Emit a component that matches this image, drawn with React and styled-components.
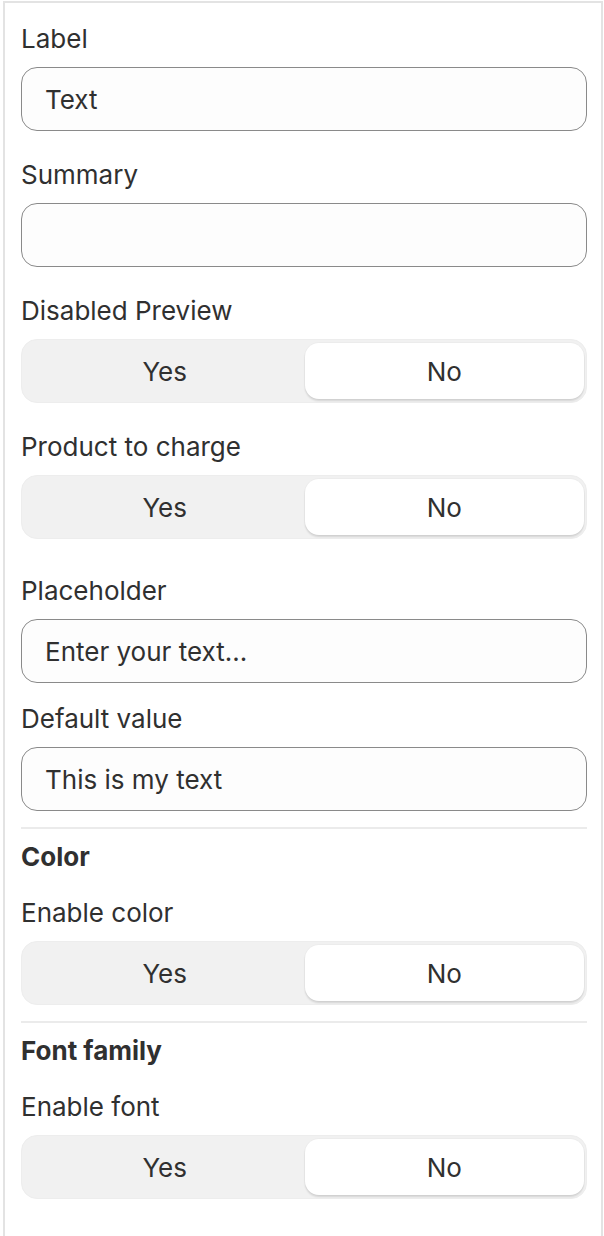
import React from "react";
import styled, { createGlobalStyle } from "styled-components";

const Global = createGlobalStyle`
  html, body { margin: 0; padding: 0; background: #ffffff; }
  body { font-family: Inter, "Noto Sans", "Liberation Sans", sans-serif; color: #303030; }
  * { box-sizing: border-box; }
`;

const Panel = styled.div`
  margin: 1px 1px 0 3px;
  width: 600px;
  min-height: 1235px;
  border: 2px solid #e3e3e3;
  border-bottom: none;
  padding: 18px 14px 0 16px;
  display: flex;
  flex-direction: column;
`;

const Field = styled.div`
  display: flex;
  flex-direction: column;
  gap: 10px;
  margin-bottom: ${(p) => p.$after}px;
`;

const Label = styled.label`
  font-size: 26px;
  line-height: 36px;
  font-weight: 400;
  color: #303030;
`;

const Heading = styled.div`
  font-size: 26px;
  line-height: 36px;
  font-weight: 700;
  color: #303030;
  margin-bottom: 20px;
`;

const Divider = styled.hr`
  border: none;
  height: 2px;
  background: #ebebeb;
  margin: 0 0 10px 0;
`;

const Input = styled.input`
  height: 64px;
  width: 100%;
  border: 1px solid #8a8a8a;
  border-radius: 16px;
  background: #fdfdfd;
  padding: 0 23px;
  font-family: inherit;
  font-size: 26px;
  color: #303030;
  outline: none;
  &::placeholder { color: #303030; opacity: 1; }
`;

const Segmented = styled.div`
  height: 64px;
  display: flex;
  padding: 3px 2px 3px 3px;
  background: #f1f1f1;
  border: 1px solid #ededed;
  border-radius: 16px;
`;

const SegButton = styled.button`
  flex: 1;
  border: none;
  border-radius: 14px;
  font-family: inherit;
  font-size: 26px;
  color: #303030;
  background: ${(p) => (p.$active ? "#ffffff" : "transparent")};
  box-shadow: ${(p) => (p.$active ? "0 2px 2px rgba(0,0,0,0.12), 0 0 0 1px rgba(0,0,0,0.02)" : "none")};
  cursor: pointer;
  padding: 0;
`;

function TextField({ label, value, placeholder, after }) {
  return (
    <Field $after={after}>
      <Label>{label}</Label>
      <Input defaultValue={value} placeholder={placeholder} />
    </Field>
  );
}

function Toggle({ label, after }) {
  return (
    <Field $after={after}>
      <Label>{label}</Label>
      <Segmented>
        <SegButton>Yes</SegButton>
        <SegButton $active>No</SegButton>
      </Segmented>
    </Field>
  );
}

export default function App() {
  return (
    <>
      <Global />
      <Panel>
        <TextField label="Label" value="Text" after={26} />
        <TextField label="Summary" value="" after={26} />
        <Toggle label="Disabled Preview" after={26} />
        <Toggle label="Product to charge" after={34} />
        <TextField label="Placeholder" placeholder="Enter your text..." after={18} />
        <TextField label="Default value" value="This is my text" after={16} />
        <Divider />
        <Heading>Color</Heading>
        <Toggle label="Enable color" after={16} />
        <Divider />
        <Heading>Font family</Heading>
        <Toggle label="Enable font" after={0} />
      </Panel>
    </>
  );
}
